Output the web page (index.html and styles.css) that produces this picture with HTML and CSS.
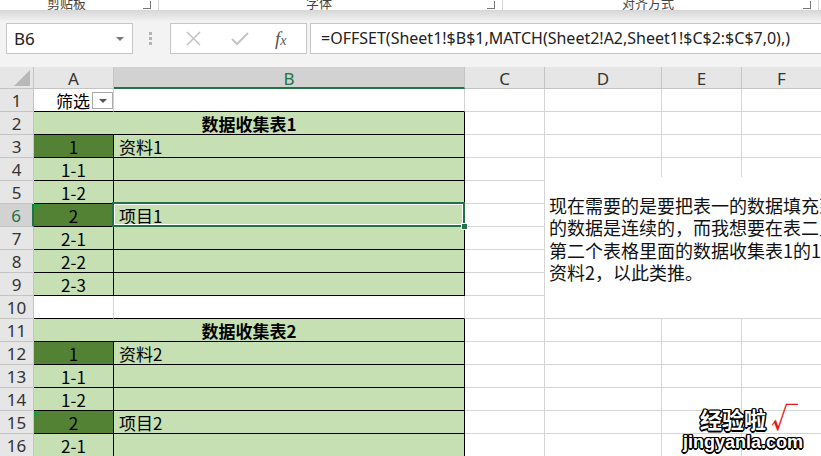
FILE: index.html
```html
<!DOCTYPE html>
<html lang="zh-CN">
<head>
    <meta charset="UTF-8">
    <title>数据收集表</title>
    <link rel="stylesheet" href="styles.css">
</head>
<body>
    <div class="ribbon">
        <div class="group g1"><span class="label">剪贴板</span><span class="launcher"></span></div>
        <div class="group g2"><span class="label">字体</span><span class="launcher"></span></div>
        <div class="group g3"><span class="label">对齐方式</span><span class="launcher"></span></div>
    </div>

    <div class="formula-bar">
        <div class="name-box">
            <span>B6</span>
            <span class="caret"></span>
        </div>
        <div class="dots"><i></i><i></i><i></i></div>
        <div class="fx-box">
            <svg class="btn-x" width="15" height="15" viewBox="0 0 15 15"><path d="M1 1 L14 14 M14 1 L1 14" stroke="#c4c4c4" stroke-width="1.6" fill="none"/></svg>
            <svg class="btn-ok" width="18" height="15" viewBox="0 0 18 15"><path d="M1 8 L6 13 L17 2" stroke="#c4c4c4" stroke-width="2" fill="none"/></svg>
            <span class="btn-fx">f<small>x</small></span>
        </div>
        <div class="formula-input">=OFFSET(Sheet1!$B$1,MATCH(Sheet2!A2,Sheet1!$C$2:$C$7,0),)</div>
    </div>

    <div class="sheet">
        <!-- cells are generated below -->
        <div class="textbox">
            <div>现在需要的是要把表一的数据填充到表二，表一</div>
            <div>的数据是连续的，而我想要在表二里面显示出来，</div>
            <div>第二个表格里面的数据收集表1的1的对应的是</div>
            <div>资料2，以此类推。</div>
        </div>
        <div class="watermark">
            <div class="wm-cn">经验啦 <span class="wm-check">√</span></div>
            <div class="wm-en">jingyanla.com</div>
        </div>
    </div>

    <script>
        document.addEventListener("DOMContentLoaded", function () {
            const sheet = document.querySelector(".sheet");
            const textbox = document.querySelector(".textbox");

            const rows = [
                { a: "筛选", edge: true, filter: true },
                { title: "数据收集表1" },
                { a: "1", b: "资料1", dark: true },
                { a: "1-1" },
                { a: "1-2" },
                { a: "2", b: "项目1", dark: true, err: true, active: true },
                { a: "2-1" },
                { a: "2-2" },
                { a: "2-3" },
                { edge: true },
                { title: "数据收集表2" },
                { a: "1", b: "资料2", dark: true },
                { a: "1-1" },
                { a: "1-2" },
                { a: "2", b: "项目2", dark: true, err: true },
                { a: "2-1" }
            ];

            function cell(cls, text) {
                let el = document.createElement("div");
                el.className = "cell " + cls;
                if (text) el.textContent = text;
                sheet.insertBefore(el, textbox);
                return el;
            }

            // column headers
            let corner = cell("hd corner");
            corner.innerHTML = '<svg width="16" height="16" viewBox="0 0 16 16"><path d="M16 0 L16 16 L0 16 Z" fill="#b8b8b8"/></svg>';
            ["A", "B", "C", "D", "E", "F"].forEach(col => {
                cell(col == "B" ? "hd col sel" : "hd col", col);
            });

            rows.forEach((row, i) => {
                cell(row.active ? "hd row sel" : "hd row", String(i + 1));

                if (row.title) {
                    cell("tb title", row.title);
                } else if (row.edge) {
                    let a = cell("edge ctr");
                    if (row.filter) {
                        a.classList.add("filter-cell");
                        a.innerHTML = '<span>' + row.a + '</span><span class="filter-btn"></span>';
                    }
                    cell("edge");
                } else {
                    cell("tb ctr" + (row.dark ? " dk" : "") + (row.err ? " err" : ""), row.a);
                    cell("tb" + (row.active ? " active" : ""), row.b);
                }

                for (let c = 0; c < 4; c++) cell("");
            });
        });
    </script>
</body>
</html>
```

FILE: styles.css
```css
body {
    margin: 0;
    width: 821px;
    height: 456px;
    overflow: hidden;
    background-color: #fff;
    font-family: "Noto Sans", "Noto Sans CJK SC", sans-serif;
    color: #000;
}

/* Ribbon strip (cut off at top) */
.ribbon {
    height: 10px;
    overflow: hidden;
    display: flex;
    background-color: #fff;
}

.group {
    display: flex;
    align-items: flex-end;
    flex-shrink: 0;
    box-sizing: border-box;
    height: 10px;
    border-right: 1px solid #d4d4d4;
}

.g1 { width: 159px; }
.g2 { width: 344px; }
.g3 { width: 316px; }

.label {
    font-family: "Noto Sans CJK SC", sans-serif;
    font-size: 13px;
    line-height: 13px;
    color: #444;
    margin-bottom: 1px;
}

.g1 .label { margin-left: 47px; }
.g2 .label { margin-left: 147px; }
.g3 .label { margin-left: 119px; }

.launcher {
    width: 7px;
    height: 7px;
    margin-left: auto;
    margin-right: 7px;
    margin-bottom: 1px;
    border-right: 1px solid #777;
    border-bottom: 1px solid #777;
}

/* Formula bar */
.formula-bar {
    height: 57px;
    box-sizing: border-box;
    padding: 13px 0 0 6px;
    display: flex;
    align-items: flex-start;
    background: linear-gradient(#d6d6d6, #f3f3f3 12px);
}

.formula-bar > * {
    flex-shrink: 0;
}

.name-box {
    width: 127px;
    height: 31px;
    box-sizing: border-box;
    border: 1px solid #c6c6c6;
    background-color: #fff;
    display: flex;
    align-items: center;
    justify-content: space-between;
    padding: 0 8px 0 7px;
    font-size: 17px;
    color: #222;
}

.caret {
    width: 0;
    height: 0;
    border-left: 4px solid transparent;
    border-right: 4px solid transparent;
    border-top: 4px solid #777;
}

.dots {
    width: 4px;
    margin: 9px 0 0 16px;
    display: flex;
    flex-direction: column;
    gap: 2px;
}

.dots i {
    display: block;
    width: 3px;
    height: 3px;
    background-color: #b4b4b4;
}

.fx-box {
    width: 137px;
    height: 31px;
    margin-left: 17px;
    box-sizing: border-box;
    border: 1px solid #c6c6c6;
    background-color: #fff;
    display: flex;
    align-items: center;
}

.btn-x { margin-left: 15px; }
.btn-ok { margin-left: 30px; }

.btn-fx {
    margin-left: 26px;
    font-family: "Liberation Serif", serif;
    font-style: italic;
    font-size: 19px;
    color: #555;
}

.btn-fx small {
    font-size: 14px;
}

.formula-input {
    width: 540px;
    height: 31px;
    margin-left: 3px;
    box-sizing: border-box;
    border: 1px solid #c6c6c6;
    background-color: #fff;
    padding-left: 10px;
    font-size: 16px;
    line-height: 29px;
    color: #222;
    white-space: nowrap;
}

/* Worksheet */
.sheet {
    position: relative;
    height: 389px;
    overflow: hidden;
    display: grid;
    grid-template-columns: 34px 80px 351px 80px 117px 80px 80px;
    grid-template-rows: 22px;
    grid-auto-rows: 23px;
}

.cell {
    box-sizing: border-box;
    border-right: 1px solid #d4d4d4;
    border-bottom: 1px solid #d4d4d4;
    padding: 0 5px;
    font-family: "Noto Sans CJK SC", sans-serif;
    font-size: 17px;
    line-height: 23px;
    white-space: nowrap;
    overflow: hidden;
}

.hd {
    background-color: #e6e6e6;
    border-color: #c4c4c4;
    color: #333;
    text-align: center;
    padding: 0;
    font-family: "Noto Sans", sans-serif;
}

.hd.col {
    font-size: 17px;
    line-height: 23px;
}

.hd.row {
    font-size: 17px;
    line-height: 24px;
}

.hd.sel {
    background-color: #d2d2d2;
    color: #217346;
}

.hd.col.sel { border-bottom: 2px solid #217346; }
.hd.row.sel { border-right: 2px solid #217346; }

.corner {
    display: flex;
    align-items: flex-end;
    justify-content: flex-end;
    padding: 0 3px 2px 0;
}

.ctr {
    text-align: center;
    padding: 0;
}

.tb {
    background-color: #c6e0b4;
    border-right-color: #000;
    border-bottom-color: #000;
}

.tb.dk {
    background-color: #548235;
}

.title {
    grid-column: span 2;
    text-align: center;
    font-weight: bold;
}

.edge {
    border-bottom-color: #000;
}

.filter-cell {
    display: flex;
    align-items: center;
    justify-content: flex-end;
    padding-right: 0;
}

.filter-btn {
    position: relative;
    width: 21px;
    height: 17px;
    margin-left: 2px;
    box-sizing: border-box;
    border: 1px solid #ababab;
    background-color: #fff;
}

.filter-btn::after {
    content: "";
    position: absolute;
    left: 6px;
    top: 6px;
    border-left: 4px solid transparent;
    border-right: 4px solid transparent;
    border-top: 4px solid #555;
}

/* green error marker */
.err {
    position: relative;
}

.err::before {
    content: "";
    position: absolute;
    left: 0;
    top: 0;
    border-top: 7px solid #1f9a3a;
    border-right: 7px solid transparent;
}

/* active cell */
.active {
    position: relative;
    overflow: visible;
    z-index: 2;
}

.active::before {
    content: "";
    position: absolute;
    left: -2px;
    top: -2px;
    right: -1px;
    bottom: -1px;
    border: 2px solid #217346;
    box-shadow: inset 0 0 0 1px #fff;
}

.active::after {
    content: "";
    position: absolute;
    right: -4px;
    bottom: -4px;
    width: 5px;
    height: 5px;
    background-color: #217346;
    border: 1px solid #fff;
}

/* floating text box */
.textbox {
    position: absolute;
    left: 545px;
    top: 110px;
    width: 360px;
    height: 141px;
    box-sizing: border-box;
    padding: 17px 0 0 4px;
    background-color: #fff;
    font-family: "Noto Sans CJK SC", sans-serif;
    font-size: 18px;
    line-height: 22.4px;
    white-space: nowrap;
    color: #111;
}

.watermark {
    position: absolute;
    left: 683px;
    top: 336px;
    color: #fff;
    font-weight: bold;
    text-shadow: -1.5px 0 #000, 1.5px 0 #000, 0 -1.5px #000, 0 1.5px #000,
                 -1px -1px #000, 1px 1px #000, -1px 1px #000, 1px -1px #000;
}

.wm-cn {
    font-family: "Noto Sans CJK SC", sans-serif;
    font-size: 22px;
    line-height: 27px;
    padding-left: 17px;
    white-space: nowrap;
}

.wm-check {
    color: #e8141a;
    text-shadow: none;
    font-size: 27px;
    font-weight: bold;
}

.wm-en {
    font-family: "Liberation Sans", sans-serif;
    font-size: 18px;
    line-height: 20px;
}
```
